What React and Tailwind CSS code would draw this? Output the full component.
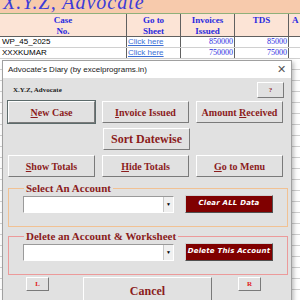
import React from "react";

const serif = { fontFamily: '"Liberation Serif", "Times New Roman", serif' };
const sans = { fontFamily: '"Liberation Sans", Arial, sans-serif' };

function WinButton({ children, className = "", focused = false }) {
    return (
        <div
            className={`flex items-center justify-center bg-[#e1e1e1] border border-t-white border-l-white border-b-[#7a7a7a] border-r-[#7a7a7a] ${
                focused ? "outline outline-1 outline-[#5c6b6b]" : ""
            } ${className}`}
        >
            {children}
        </div>
    );
}

function Label({ u, rest, pre = "" }) {
    return (
        <span className="whitespace-pre text-[10px] font-bold text-[#8b1c1c]" style={serif}>
            {pre}
            <span className="underline">{u}</span>
            {rest}
        </span>
    );
}

function Combo() {
    return (
        <div className="flex h-[17px] w-[151px] border border-t-[#9a9a9a] border-l-[#9a9a9a] border-b-white border-r-white bg-white">
            <div className="flex-1" />
            <div className="flex w-[10px] items-center justify-center border-l border-[#c8c8c8] bg-[#f0f0f0] text-[5px] text-black">
                ▼
            </div>
        </div>
    );
}

function RedButton({ children }) {
    return (
        <div className="flex h-[18px] w-[88px] items-center justify-center border border-t-[#d0d0d0] border-l-[#d0d0d0] border-b-[#505050] border-r-[#505050] bg-[#800000]">
            <span
                className="text-[7px] italic tracking-[0.2px] text-white"
                style={{ fontFamily: '"DejaVu Sans", sans-serif', fontWeight: 600 }}
            >
                {children}
            </span>
        </div>
    );
}

function Frame({ title, color, children }) {
    return (
        <fieldset className={`mx-[5px] h-[45px] border ${color} px-[14px] pt-[2px]`}>
            <legend className="ml-[1px] px-[2px] text-[11px] font-bold leading-[12px] text-[#8b1c1c]" style={serif}>
                {title}
            </legend>
            <div className="flex items-center">
                {children}
            </div>
        </fieldset>
    );
}

export default function App() {
    const rowLines = Array.from({ length: 22 });

    return (
        <div className="relative h-[300px] w-[300px] overflow-hidden bg-white">
            {/* Sheet background */}
            <div className="h-[14px] overflow-hidden border-b border-[#8fb07a] bg-[#f7caac]">
                <div
                    className="mt-[-8px] pl-[3px] text-[20px] italic leading-[20px] tracking-[1px] text-[#3c3cd8]"
                    style={serif}
                >
                    X.Y.Z, Advocate
                </div>
            </div>
            <div className="flex h-[23px] border-b border-[#606060] bg-[#fce4d6] text-[9px] font-bold leading-[11px] text-[#2a2ae0]" style={serif}>
                <div className="flex w-[127px] flex-col items-center border-r border-[#606060] pt-[1px]">
                    <span>Case</span>
                    <span>No.</span>
                </div>
                <div className="flex w-[54px] flex-col items-center border-r border-[#606060] pt-[1px]">
                    <span>Go to</span>
                    <span>Sheet</span>
                </div>
                <div className="flex w-[54px] flex-col items-center border-r border-[#606060] pt-[1px]">
                    <span>Invoices</span>
                    <span>Issued</span>
                </div>
                <div className="flex w-[54px] flex-col items-center border-r border-[#606060] pt-[1px]">
                    <span>TDS</span>
                </div>
                <div className="pl-[3px] pt-[1px]">A</div>
            </div>
            {[
                ["WP_45_2025", "850000", "85000"],
                ["XXXKUMAR", "750000", "75000"],
            ].map((r) => (
                <div key={r[0]} className="flex h-[11px] border-b border-[#d0d0d0] text-[8px] leading-[10px]">
                    <div className="w-[127px] border-r border-[#606060] pl-[2px] text-black" style={sans}>
                        {r[0]}
                    </div>
                    <div className="w-[54px] border-r border-[#606060] pl-[1px] text-[#3b6fd6] underline" style={sans}>
                        Click here
                    </div>
                    <div className="w-[54px] border-r border-[#606060] pr-[1px] text-right text-[#2a2ae0]" style={serif}>
                        {r[1]}
                    </div>
                    <div className="w-[54px] border-r border-[#606060] pr-[1px] text-right text-[#2a2ae0]" style={serif}>
                        {r[2]}
                    </div>
                </div>
            ))}
            {rowLines.map((_, i) => (
                <div key={i} className="h-[11px] border-b border-[#d0d0d0]" />
            ))}

            {/* Dialog */}
            <div className="absolute left-[2px] top-[60px] h-[245px] w-[290px] border border-[#a0a0a0] bg-[#e1e1e1] shadow-[2px_2px_4px_rgba(0,0,0,0.25)]">
                <div className="flex h-[17px] items-center justify-between bg-white pl-[5px] pr-[5px]">
                    <span className="text-[8px] text-[#1a1a1a]" style={sans}>
                        Advocate's Diary (by excelprograms.in)
                    </span>
                    <span className="text-[11px] leading-none text-[#555]" style={sans}>
                        ✕
                    </span>
                </div>

                <div className="mt-[4px] flex h-[16px] items-center justify-between pl-[10px] pr-[7px]">
                    <span className="text-[7px] font-bold text-[#222]" style={serif}>
                        X.Y.Z, Advocate
                    </span>
                    <WinButton className="h-[16px] w-[27px]">
                        <span className="text-[7px] font-bold text-[#8b1c1c]" style={serif}>?</span>
                    </WinButton>
                </div>

                <div className="mt-[3px] flex flex-col gap-[5px] px-[5px]">
                    <div className="flex gap-[7px]">
                        <WinButton focused className="h-[22px] w-[87px] border-[#5c6b6b] bg-[#dfe3e3]">
                            <Label u="N" rest="ew Case" />
                        </WinButton>
                        <WinButton className="h-[22px] w-[87px]">
                            <Label u="I" rest="nvoice Issued" />
                        </WinButton>
                        <WinButton className="h-[22px] w-[87px]">
                            <Label pre="Amount " u="R" rest="eceived" />
                        </WinButton>
                    </div>
                    <div className="flex justify-center pr-[1px]">
                        <WinButton className="h-[22px] w-[87px]">
                            <span className="text-[12px] font-bold text-[#8b1c1c]" style={serif}>Sort Datewise</span>
                        </WinButton>
                    </div>
                    <div className="flex gap-[7px]">
                        <WinButton className="h-[22px] w-[87px]">
                            <Label u="S" rest="how Totals" />
                        </WinButton>
                        <WinButton className="h-[22px] w-[87px]">
                            <Label u="H" rest="ide Totals" />
                        </WinButton>
                        <WinButton className="h-[22px] w-[87px]">
                            <Label u="G" rest="o to Menu" />
                        </WinButton>
                    </div>
                </div>

                <div className="mt-[5px]">
                    <Frame title="Select An Account" color="border-[#f1c193]">
                        <Combo />
                        <div className="ml-[11px] -mt-[2px]">
                            <RedButton>Clear ALL Data</RedButton>
                        </div>
                    </Frame>
                </div>
                <div className="mt-[3px]">
                    <Frame title="Delete an Account & Worksheet" color="border-[#ec9a9a]">
                        <Combo />
                        <div className="ml-[11px] -mt-[2px]">
                            <RedButton>Delete This Account</RedButton>
                        </div>
                    </Frame>
                </div>

                <div className="mt-[2px] flex items-start pl-[23px]">
                    <WinButton className="h-[14px] w-[23px]">
                        <span className="text-[7px] font-bold text-[#e02020]" style={serif}>L</span>
                    </WinButton>
                    <WinButton className="ml-[34px] h-[30px] w-[129px] items-start pt-[4px]">
                        <span className="text-[12px] font-bold text-[#8b1c1c]" style={serif}>Cancel</span>
                    </WinButton>
                    <WinButton className="ml-[26px] h-[14px] w-[23px]">
                        <span className="text-[7px] font-bold text-[#e02020]" style={serif}>R</span>
                    </WinButton>
                </div>
            </div>
        </div>
    );
}
